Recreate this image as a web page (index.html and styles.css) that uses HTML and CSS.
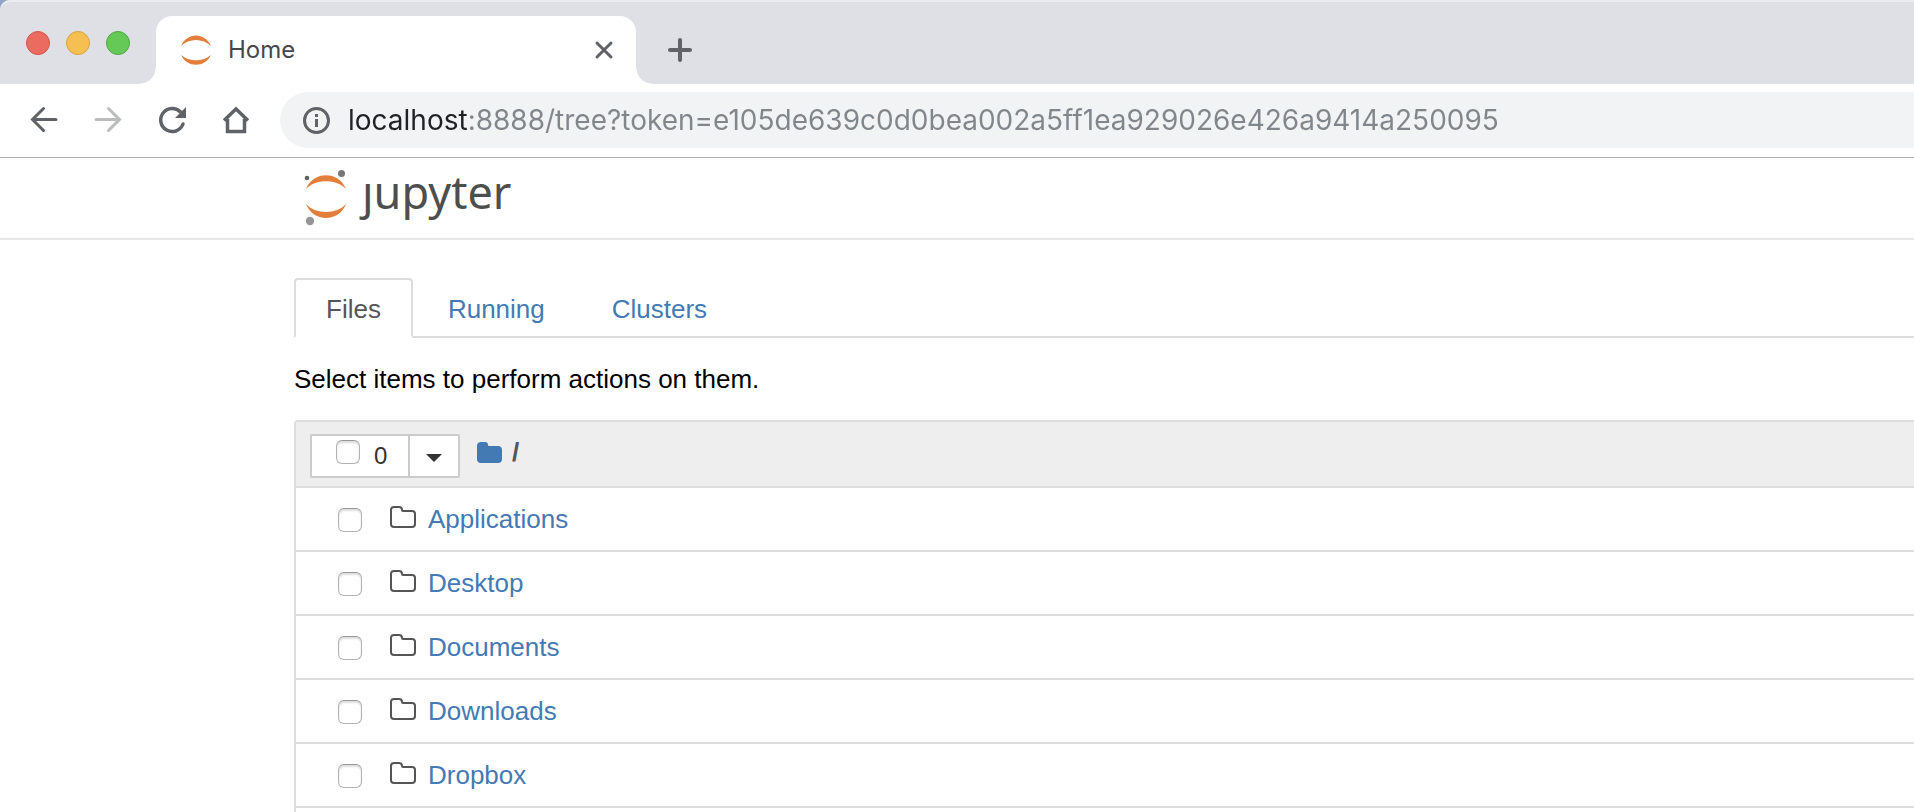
FILE: index.html
```html
<!DOCTYPE html>
<html lang="en">
<head>
<meta charset="utf-8">
<title>Home</title>
<link rel="stylesheet" href="styles.css">
</head>
<body>
<svg class="defs" aria-hidden="true">
  <symbol id="folder" viewBox="0 0 28 24">
    <path d="M5 2h5q3 0 3 3q0 1 1 1h9q3 0 3 3v10q0 3-3 3H5q-3 0-3-3V5q0-3 3-3z" fill="none" stroke="currentColor" stroke-width="2"/>
  </symbol>
</svg>
<div class="browser">
  <div class="tab-strip">
    <div class="window-buttons">
      <button class="light light-close" aria-label="Close window"></button>
      <button class="light light-min" aria-label="Minimize window"></button>
      <button class="light light-max" aria-label="Zoom window"></button>
    </div>
    <div class="browser-tab">
      <svg class="favicon" viewBox="0 0 32 32" aria-hidden="true"><path d="M1 12C7-2 25-2 31 12C23 4 9 4 1 12zM1 21C7 34 25 34 31 21C23 28 9 28 1 21z" fill="#e37e3b"/></svg>
      <span class="tab-title">Home</span>
      <button class="icon-button" aria-label="Close tab"><svg width="20" height="20" viewBox="0 0 20 20"><path d="M3 3l14 14M17 3L3 17" stroke="#5f6368" stroke-width="3" stroke-linecap="round"/></svg></button>
    </div>
    <button class="icon-button new-tab" aria-label="New tab"><svg width="24" height="24" viewBox="0 0 24 24"><path d="M12 2v20M2 12h20" stroke="#5f6368" stroke-width="4" stroke-linecap="round"/></svg></button>
  </div>
  <div class="toolbar">
    <div class="nav-buttons">
      <button class="icon-button" aria-label="Back"><svg width="32" height="32" viewBox="0 0 32 32"><path d="M28 15.500H5M15.500 4.500L4.500 15.500l11 11" fill="none" stroke="#5f6368" stroke-width="3" stroke-linecap="round"/></svg></button>
      <button class="icon-button" aria-label="Forward" disabled><svg width="32" height="32" viewBox="0 0 32 32"><path d="M4 15.500h23M16.500 4.500l11 11-11 11" fill="none" stroke="#babcbe" stroke-width="3" stroke-linecap="round"/></svg></button>
      <button class="icon-button" aria-label="Reload"><svg width="32" height="32" viewBox="0 0 32 32"><path d="M27 20A11.500 11.500 0 1 1 24.500 8" fill="none" stroke="#5f6368" stroke-width="3.500" stroke-linecap="round"/><path d="M30 3v11H19z" fill="#5f6368"/></svg></button>
      <button class="icon-button" aria-label="Home page"><svg width="32" height="32" viewBox="0 0 32 32"><path d="M7.500 15v12.500h17V15M4 16.500L16 5l12 11.500" fill="none" stroke="#5f6368" stroke-width="3.500"/></svg></button>
    </div>
    <div class="omnibox">
      <svg width="28" height="28" viewBox="0 0 28 28" aria-hidden="true"><circle cx="14.500" cy="14.500" r="12" fill="none" stroke="#5f6368" stroke-width="3"/><path d="M13 8h3v3h-3zM13 13h3v8h-3z" fill="#5f6368"/></svg>
      <input class="url" type="text" aria-label="Address" spellcheck="false" value="localhost:8888/tree?token=e105de639c0d0bea002a5ff1ea929026e426a9414a250095">
    </div>
  </div>
</div>
<header class="site-header">
  <a class="logo" href="#">
    <svg width="44" height="56" viewBox="0 0 44 56" aria-hidden="true"><path d="M2 19C9 .500 35 .500 42 19C33 8.500 11 8.500 2 19zM2 34C9 52.500 35 52.500 42 34C33 44.500 11 44.500 2 34z" fill="#e37e3b"/><circle cx="37.500" cy="3.500" r="3.500" fill="#767677"/><circle cx="3" cy="8" r="2.300" fill="#616262"/><circle cx="6" cy="51" r="4.200" fill="#989798"/></svg>
    <span class="wordmark">ȷupyter</span>
  </a>
</header>
<main class="content">
  <nav class="tabs">
    <a class="tab active" href="#files">Files</a>
    <a class="tab" href="#running">Running</a>
    <a class="tab" href="#clusters">Clusters</a>
  </nav>
  <p class="hint">Select items to perform actions on them.</p>
  <section class="file-list">
    <div class="list-header">
      <div class="selector">
        <label class="select-all"><input type="checkbox" class="check"><span>0</span></label>
        <button class="menu-button" aria-label="Select by type"><svg width="16" height="8" viewBox="0 0 16 8"><path d="M0 0h16L8 8z" fill="#333"/></svg></button>
      </div>
      <div class="breadcrumb">
        <a href="#" aria-label="Root folder"><svg width="25" height="21" viewBox="0 0 25 21"><path d="M4 0h4q3 0 3 3q0 1 1 1h9q4 0 4 4v9q0 4-4 4H4q-4 0-4-4V4q0-4 4-4z" fill="#447ab4"/></svg></a>
        <span class="slash">/</span>
      </div>
    </div>
    <div class="row"><input type="checkbox" class="check" aria-label="Select Applications"><svg class="folder" aria-hidden="true"><use href="#folder"/></svg><a href="#">Applications</a></div>
    <div class="row"><input type="checkbox" class="check" aria-label="Select Desktop"><svg class="folder" aria-hidden="true"><use href="#folder"/></svg><a href="#">Desktop</a></div>
    <div class="row"><input type="checkbox" class="check" aria-label="Select Documents"><svg class="folder" aria-hidden="true"><use href="#folder"/></svg><a href="#">Documents</a></div>
    <div class="row"><input type="checkbox" class="check" aria-label="Select Downloads"><svg class="folder" aria-hidden="true"><use href="#folder"/></svg><a href="#">Downloads</a></div>
    <div class="row"><input type="checkbox" class="check" aria-label="Select Dropbox"><svg class="folder" aria-hidden="true"><use href="#folder"/></svg><a href="#">Dropbox</a></div>
  </section>
</main>
</body>
</html>
```

FILE: styles.css
```css
* { box-sizing: border-box; }
body {
  display: flex;
  flex-direction: column;
  min-height: 100vh;
  margin: 0;
  background: #fff;
  color: #000;
  font: 26px/36px "Liberation Sans", Arial, sans-serif;
}
button { margin: 0; padding: 0; border: 0; background: none; font: inherit; }
svg { display: block; flex: none; }
a { color: #447ab4; text-decoration: none; }
.defs { position: absolute; width: 0; height: 0; }

.browser { background: #8fa5c4; font-family: Inter, sans-serif; }
.tab-strip {
  display: flex;
  height: 84px;
  padding: 16px 0 0 26px;
  background: #dfe0e6;
  border-top-left-radius: 10px;
  box-shadow: inset 0 2px #ebecef;
}
.window-buttons { display: flex; gap: 16px; width: 130px; padding-top: 15px; }
.light { width: 24px; height: 24px; border: 1px solid; border-radius: 50%; }
.light-close { background: #ec6b60; border-color: #d2544a; }
.light-min { background: #f5c051; border-color: #d8a143; }
.light-max { background: #65c957; border-color: #50a73f; }
.browser-tab {
  position: relative;
  display: flex;
  align-items: center;
  width: 480px;
  padding: 0 22px 0 24px;
  background: #fff;
  border-radius: 16px 16px 0 0;
}
.browser-tab::before, .browser-tab::after {
  content: "";
  position: absolute;
  bottom: 0;
  width: 16px;
  height: 16px;
}
.browser-tab::before { right: 100%; background: radial-gradient(circle at 0 0, transparent 15px, #fff 16px); }
.browser-tab::after { left: 100%; background: radial-gradient(circle at 100% 0, transparent 15px, #fff 16px); }
.favicon { width: 32px; height: 32px; }
.tab-title { flex: 1; padding-left: 16px; color: #45484c; font-size: 24px; }
.icon-button { display: flex; align-items: center; justify-content: center; }
.new-tab { margin-left: 32px; }

.toolbar {
  display: flex;
  height: 74px;
  padding: 8px 0;
  background: #fff;
  border-bottom: 1px solid #b0b1b3;
}
.nav-buttons { display: flex; align-items: center; gap: 32px; width: 280px; padding-left: 28px; height: 56px; }
.omnibox {
  flex: 1;
  display: flex;
  align-items: center;
  gap: 18px;
  height: 56px;
  padding-left: 22px;
  background: #f1f3f4;
  border-radius: 28px 0 0 28px;
}
.url {
  flex: 1;
  min-width: 0;
  height: 40px;
  padding: 0;
  border: 0;
  outline: 0;
  background: linear-gradient(to right, #202124 120px, #80868b 120px);
  background-clip: text;
  -webkit-background-clip: text;
  color: transparent;
  font: 28px/40px Inter, sans-serif;
}

.site-header { padding: 0 304px; border-bottom: 2px solid #e7e7e7; }
.logo { display: inline-flex; align-items: center; gap: 14px; height: 80px; color: #4e4e4e; vertical-align: top; }
.wordmark { padding-bottom: 12px; font: 45px/60px "Noto Sans", sans-serif; }

.content { flex: 1; display: flex; flex-direction: column; padding: 38px 0 0 294px; }
.tabs { display: flex; gap: 3px; border-bottom: 2px solid #ddd; }
.tab {
  margin-bottom: -2px;
  padding: 11px 30px 9px;
  border: 2px solid transparent;
  border-radius: 4px 4px 0 0;
}
.tab.active { background: #fff; border-color: #ddd #ddd #fff; color: #555; }
.hint { margin: 23px 0; }
.file-list { flex: 1; border: 2px solid #ddd; border-width: 2px 0 0 2px; border-top-left-radius: 4px; }
.list-header {
  display: flex;
  align-items: center;
  height: 66px;
  padding-left: 14px;
  background: #eee;
  border-bottom: 2px solid #ddd;
}
.selector { display: flex; height: 44px; margin-top: 4px; background: #fff; border: 2px solid #ccc; border-radius: 2px; color: #333; font-size: 24px; }
.select-all { display: flex; width: 96px; padding: 4px 0 0 24px; gap: 14px; line-height: 32px; }
.menu-button { display: flex; align-items: center; justify-content: center; width: 50px; padding-top: 4px; border-left: 2px solid #ccc; }
.breadcrumb { display: flex; align-items: center; gap: 10px; padding: 0 0 4px 17px; }
.slash { color: #555; font-weight: bold; }
.check {
  appearance: none;
  flex: none;
  width: 24px;
  height: 24px;
  margin: 0;
  background: #fff;
  border: 1px solid #b2b2b2;
  border-top-color: #999;
  border-radius: 6px;
  box-shadow: inset 0 2px 2px #ddd;
}
.row { display: flex; align-items: center; height: 64px; padding-left: 42px; border-bottom: 2px solid #ddd; }
.row .check { margin-top: 2px; }
.folder { width: 28px; height: 24px; margin: 0 11px 4px 27px; color: #555; }
```
